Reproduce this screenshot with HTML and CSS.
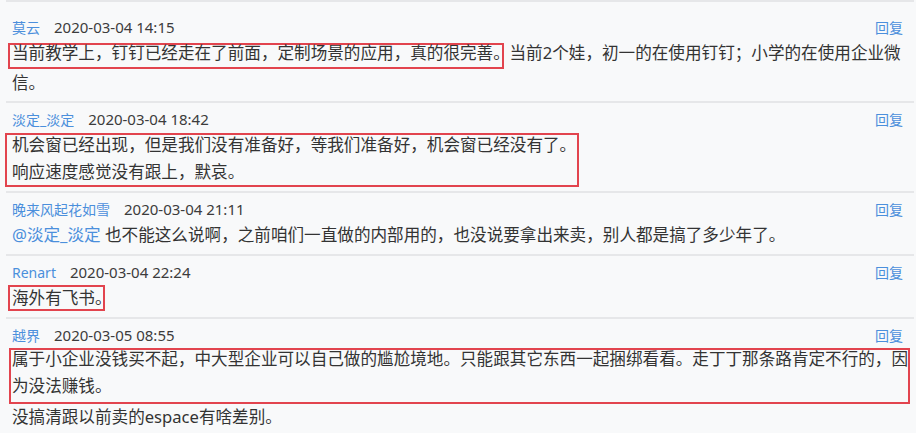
FILE: index.html
```html
<!DOCTYPE html>
<html lang="zh-CN">
  <head>
    <meta charset="UTF-8" />
    <title>评论</title>
    <link rel="stylesheet" href="styles.css">
  </head>
  <body>
    <div class="comments">
      <div class="comment first">
        <div class="meta">
          <span class="user">莫云</span>
          <span class="time">2020-03-04 14:15</span>
          <span class="reply">回复</span>
        </div>
        <p class="text"><span class="mark mark-top">当前教学上，钉钉已经走在了前面，定制场景的应用，真的很完善<span class="stop">。</span></span>当前2个娃，初一的在使用钉钉；小学的在使用企业微信。</p>
      </div>
      <div class="comment">
        <div class="meta">
          <span class="user">淡定_淡定</span>
          <span class="time">2020-03-04 18:42</span>
          <span class="reply">回复</span>
        </div>
        <div class="text box box-short">机会窗已经出现，但是我们没有准备好，等我们准备好，机会窗已经没有了。<br>响应速度感觉没有跟上，默哀。</div>
      </div>
      <div class="comment">
        <div class="meta">
          <span class="user">晚来风起花如雪</span>
          <span class="time">2020-03-04 21:11</span>
          <span class="reply">回复</span>
        </div>
        <p class="text"><span class="at">@淡定_淡定</span> 也不能这么说啊，之前咱们一直做的内部用的，也没说要拿出来卖，别人都是搞了多少年了。</p>
      </div>
      <div class="comment">
        <div class="meta">
          <span class="user">Renart</span>
          <span class="time">2020-03-04 22:24</span>
          <span class="reply">回复</span>
        </div>
        <p class="text"><span class="mark">海外有飞书<span class="stop">。</span></span></p>
      </div>
      <div class="comment">
        <div class="meta">
          <span class="user">越界</span>
          <span class="time">2020-03-05 08:55</span>
          <span class="reply">回复</span>
        </div>
        <div class="text box box-wide">属于小企业没钱买不起，中大型企业可以自己做的尴尬境地。只能跟其它东西一起捆绑看看。走丁丁那条路肯定不行的，因为没法赚钱。</div>
        <p class="text">没搞清跟以前卖的espace有啥差别。</p>
      </div>
    </div>
  </body>
</html>
```

FILE: styles.css
```css
*{
    margin: 0;
    padding: 0;
    box-sizing: border-box;
}
body{
    background: #f8f9fa;
    color: #333;
    font-family: "Noto Sans", "Noto Sans CJK SC", sans-serif;
    overflow: hidden;
}
.comments{
    margin: 0 2px 0 6px;
}
.comment{
    border-top: 2px solid #e6e7e9;
    padding: 5px 4px 6px 6px;
}
.comment.first{
    padding-top: 14px;
    padding-bottom: 5px;
}
.meta{
    display: flex;
    align-items: baseline;
    line-height: 22px;
}
.user{
    font-size: 14px;
    color: #4b8fdc;
}
.time{
    font-size: 15px;
    color: #3c3c3c;
    margin-left: 14px;
}
.reply{
    font-size: 14px;
    color: #4b8fdc;
    margin-left: auto;
    margin-right: 7px;
}
.text{
    font-size: 16.6px;
    line-height: 27px;
}
.at{
    color: #4b8fdc;
}

/* red marks drawn round the quoted parts */
.mark{
    display: inline-block;
    white-space: nowrap;
    border: 2px solid #e2444e;
    line-height: 22px;
    margin: 0 6px 0 -4px;
    padding-left: 2px;
}
.mark-top{
    line-height: 16px;
    padding-bottom: 6px;
}
.stop{
    margin-right: -0.5em;
}
.box{
    position: relative;
}
.box::after{
    content: "";
    position: absolute;
    border: 2px solid #e2444e;
}
.box-short{
    display: table;
}
.box-short::after{
    top: 2px;
    bottom: -2px;
    left: -7px;
    right: -3px;
}
.box-wide{
    margin: -2px 0 4px;
}
.box-wide::after{
    top: 3px;
    bottom: -5px;
    left: -3px;
    right: 0;
}
```
